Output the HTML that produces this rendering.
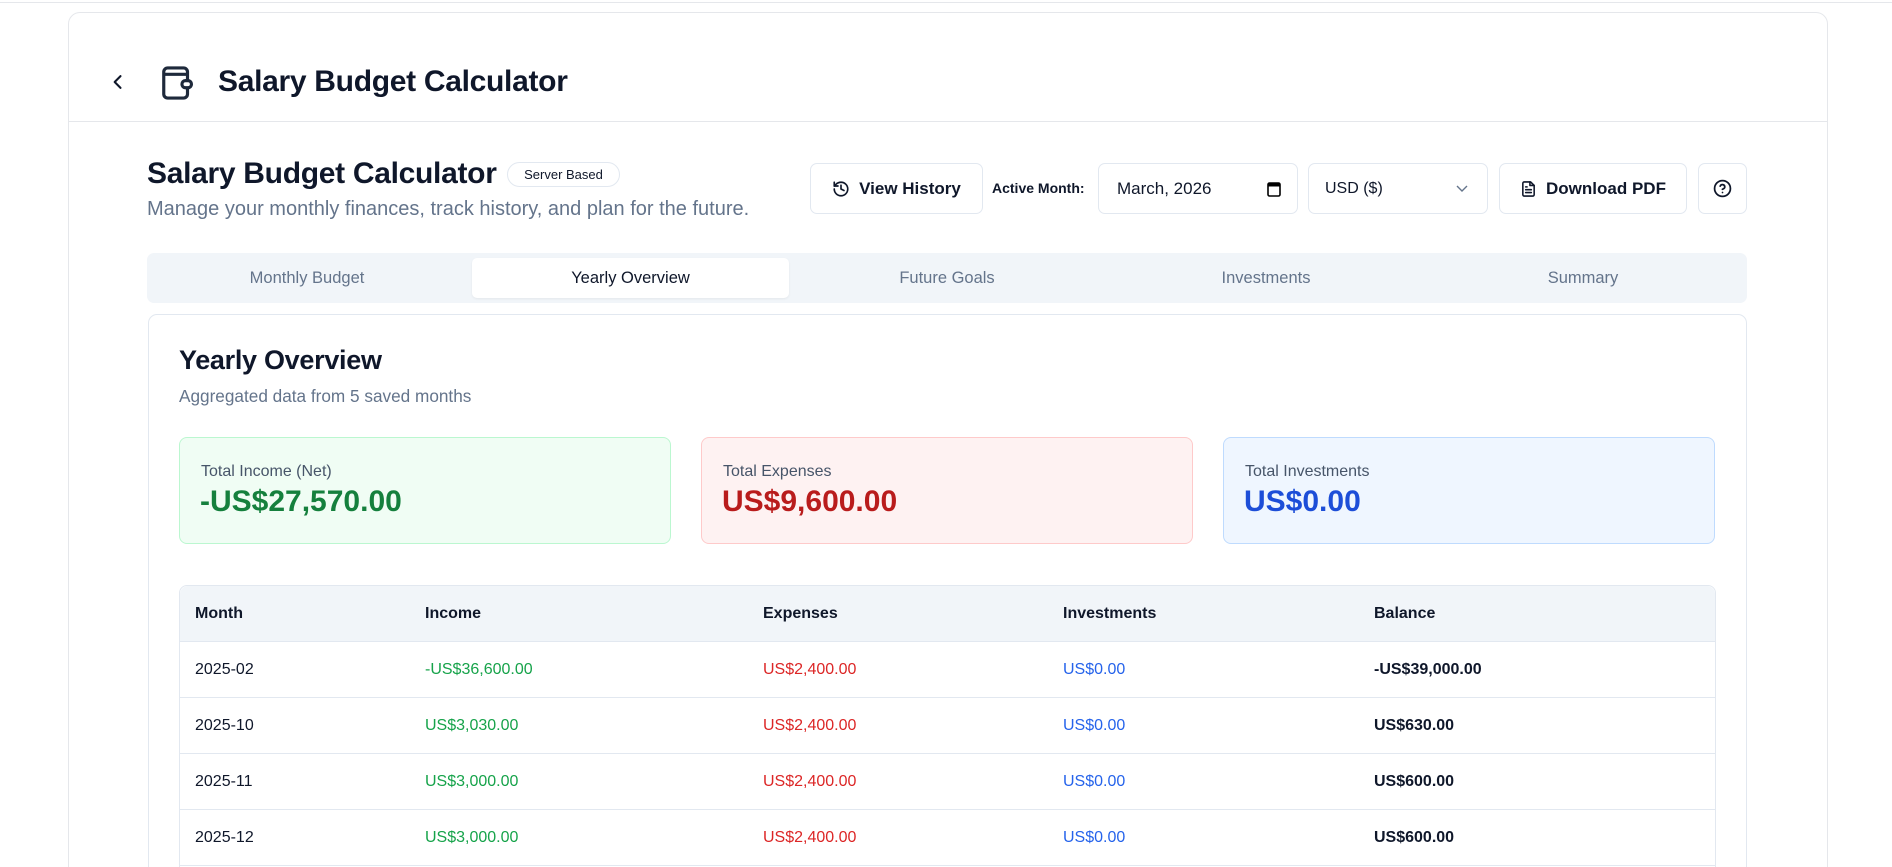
<!DOCTYPE html>
<html><head><meta charset="utf-8">
<style>
*{box-sizing:border-box;margin:0;padding:0}
html,body{width:1892px;height:867px;overflow:hidden}
body{background:#fff;font-family:"Liberation Sans",sans-serif;color:#0f172a}
#root{position:relative;width:1892px;height:867px;overflow:hidden}
.abs{position:absolute}
.topline{left:0;right:0;top:0;height:3px;border-bottom:1px solid #e5e7eb}
.card{left:68px;top:12px;width:1760px;height:880px;border:1px solid #e5e7eb;border-radius:12px}
.hdr{left:68px;top:121px;width:1760px;border-top:1px solid #e5e7eb}
.btn{border:1px solid #e2e8f0;border-radius:7px;background:#fff;display:flex;align-items:center;justify-content:center;font-size:17px;font-weight:bold;height:51px;top:163px}
.tabs{left:147px;top:253px;width:1600px;height:50px;background:#f1f5f9;border-radius:7px}
.tab{position:absolute;top:0;height:50px;width:320px;display:flex;align-items:center;justify-content:center;font-size:16.5px;color:#64748b}
.stat{top:437px;height:107px;width:492px;border-radius:8px;border:1px solid}
.stat .l{position:absolute;left:21px;top:25px;font-size:16px;color:#475569}
.stat .v{position:absolute;left:20px;top:47px;font-size:30px;font-weight:bold}
table{position:absolute;left:179px;top:585px;width:1537px;border-collapse:separate;border-spacing:0;border:1px solid #e2e8f0;border-radius:8px;font-size:16px}
th{background:#f1f5f9;height:55px;text-align:left;font-weight:bold;padding-left:15px}
td{height:56px;border-top:1px solid #e2e8f0;padding-left:15px}
.g{color:#16a34a}.r{color:#dc2626}.b{color:#2563eb}.k{font-weight:bold}
</style></head><body><div id="root">
<div class="abs topline"></div>
<div class="abs card"></div>
<svg class="abs" style="left:108px;top:72px" width="20" height="20" viewBox="0 0 24 24" fill="none" stroke="#0f172a" stroke-width="2.5" stroke-linecap="round" stroke-linejoin="round"><path d="M15 5l-7 7 7 7"/></svg>
<svg class="abs" style="left:158px;top:64px" width="40" height="38" viewBox="0 0 24 24" fill="none" stroke="#1e293b" stroke-width="2" stroke-linejoin="round"><rect x="3" y="2.5" width="15" height="19" rx="2.5"/><path d="M3 6.5h15"/><rect x="14.5" y="10.5" width="6" height="4.5" rx="2.2" fill="#fff"/></svg>
<div class="abs" style="left:218px;top:65px;font-size:30px;font-weight:bold;letter-spacing:-0.3px">Salary Budget Calculator</div>
<div class="abs hdr"></div>

<div class="abs" style="left:147px;top:157px;font-size:30px;font-weight:bold;letter-spacing:-0.3px">Salary Budget Calculator</div>
<div class="abs" style="left:507px;top:162px;width:113px;height:25px;border:1px solid #e2e8f0;border-radius:13px;font-size:13px;display:flex;align-items:center;justify-content:center">Server Based</div>
<div class="abs" style="left:147px;top:198px;font-size:20px;color:#64748b">Manage your monthly finances, track history, and plan for the future.</div>

<div class="abs btn" style="left:810px;width:173px"><svg width="18" height="18" viewBox="0 0 24 24" fill="none" stroke="#0f172a" stroke-width="2.2" stroke-linecap="round" stroke-linejoin="round" style="margin-right:9px"><path d="M3 12a9 9 0 1 0 9-9 9.75 9.75 0 0 0-6.74 2.74L3 8"/><path d="M3 3v5h5"/><path d="M12 7v5l4 2"/></svg>View History</div>
<div class="abs" style="left:992px;top:180px;font-size:14px;font-weight:bold">Active Month:</div>
<div class="abs btn" style="left:1098px;width:200px;justify-content:flex-start;padding-left:18px;font-weight:normal">March, 2026<svg style="position:absolute;right:16px" width="14" height="16" viewBox="0 0 14 16"><rect x="1" y="2" width="12" height="13" rx="1.5" fill="none" stroke="#000" stroke-width="1.6"/><rect x="1" y="2" width="12" height="3.5" fill="#000"/></svg></div>
<div class="abs btn" style="left:1308px;width:180px;justify-content:flex-start;padding-left:16px;font-weight:normal;font-size:16px">USD ($)<svg style="position:absolute;right:18px" width="14" height="10" viewBox="0 0 14 10" fill="none" stroke="#64748b" stroke-width="1.4"><path d="M2 2l5 5 5-5"/></svg></div>
<div class="abs btn" style="left:1499px;width:188px"><svg width="17" height="18" viewBox="0 0 24 24" fill="none" stroke="#0f172a" stroke-width="2.2" stroke-linecap="round" stroke-linejoin="round" style="margin-right:9px"><path d="M15 2H6a2 2 0 0 0-2 2v16a2 2 0 0 0 2 2h12a2 2 0 0 0 2-2V7z"/><path d="M14 2v5h6"/><path d="M8 13h8M8 17h8M8 9h2"/></svg>Download PDF</div>
<div class="abs btn" style="left:1698px;width:49px"><svg width="19" height="19" viewBox="0 0 24 24" fill="none" stroke="#0f172a" stroke-width="2.2" stroke-linecap="round" stroke-linejoin="round"><circle cx="12" cy="12" r="10"/><path d="M9.1 9a3 3 0 0 1 5.8 1c0 2-3 3-3 3"/><path d="M12 17h.01"/></svg></div>

<div class="abs tabs">
<div class="tab" style="left:0">Monthly Budget</div>
<div class="tab" style="left:325px;top:5px;height:40px;width:317px;background:#fff;border-radius:5px;color:#0f172a;box-shadow:0 1px 2px rgba(0,0,0,.06)">Yearly Overview</div>
<div class="tab" style="left:640px">Future Goals</div>
<div class="tab" style="left:959px">Investments</div>
<div class="tab" style="left:1276px">Summary</div>
</div>

<div class="abs" style="left:148px;top:314px;width:1599px;height:600px;border:1px solid #e2e8f0;border-radius:9px"></div>
<div class="abs" style="left:179px;top:345px;font-size:27px;font-weight:bold;letter-spacing:-0.3px">Yearly Overview</div>
<div class="abs" style="left:179px;top:386px;font-size:17.2px;color:#64748b">Aggregated data from 5 saved months</div>

<div class="abs stat" style="left:179px;background:#f0fdf4;border-color:#bbf7d0"><div class="l">Total Income (Net)</div><div class="v" style="color:#15803d">-US$27,570.00</div></div>
<div class="abs stat" style="left:701px;background:#fef2f2;border-color:#fecaca"><div class="l">Total Expenses</div><div class="v" style="color:#b91c1c">US$9,600.00</div></div>
<div class="abs stat" style="left:1223px;background:#eff6ff;border-color:#bfdbfe"><div class="l">Total Investments</div><div class="v" style="color:#1d4ed8">US$0.00</div></div>

<table>
<tr><th style="width:230px;border-top-left-radius:8px">Month</th><th style="width:338px">Income</th><th style="width:300px">Expenses</th><th style="width:311px">Investments</th><th style="border-top-right-radius:8px">Balance</th></tr>
<tr><td>2025-02</td><td class="g">-US$36,600.00</td><td class="r">US$2,400.00</td><td class="b">US$0.00</td><td class="k">-US$39,000.00</td></tr>
<tr><td>2025-10</td><td class="g">US$3,030.00</td><td class="r">US$2,400.00</td><td class="b">US$0.00</td><td class="k">US$630.00</td></tr>
<tr><td>2025-11</td><td class="g">US$3,000.00</td><td class="r">US$2,400.00</td><td class="b">US$0.00</td><td class="k">US$600.00</td></tr>
<tr><td>2025-12</td><td class="g">US$3,000.00</td><td class="r">US$2,400.00</td><td class="b">US$0.00</td><td class="k">US$600.00</td></tr>
<tr><td>2026-01</td><td class="g">US$3,000.00</td><td class="r">US$2,400.00</td><td class="b">US$0.00</td><td class="k">US$600.00</td></tr>
</table>
</div></body></html>
